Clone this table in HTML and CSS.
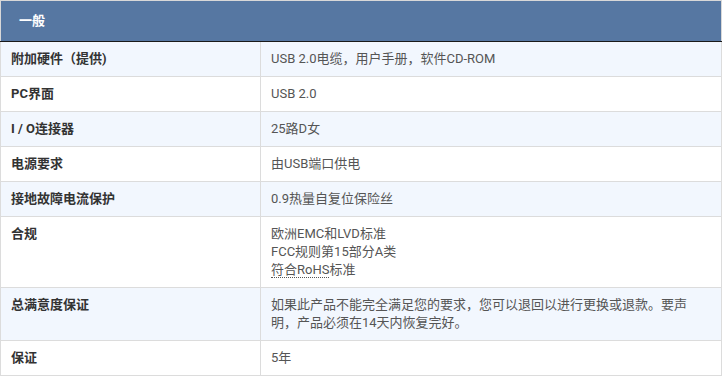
FILE: index.html
```html
<!DOCTYPE html>
<html lang="zh">
<head>
<meta charset="utf-8">
<link rel="stylesheet" href="styles.css">
</head>
<body>
<table class="spec">
  <thead>
    <tr><th colspan="2" class="head">一般</th></tr>
  </thead>
  <tbody>
    <tr class="alt"><td class="k">附加硬件（提供)</td><td class="v">USB 2.0电缆，用户手册，软件CD-ROM</td></tr>
    <tr><td class="k">PC界面</td><td class="v">USB 2.0</td></tr>
    <tr class="alt"><td class="k">I / O连接器</td><td class="v">25路D女</td></tr>
    <tr><td class="k">电源要求</td><td class="v">由USB端口供电</td></tr>
    <tr class="alt"><td class="k">接地故障电流保护</td><td class="v">0.9热量自复位保险丝</td></tr>
    <tr><td class="k">合规</td><td class="v">欧洲EMC和LVD标准<br>FCC规则第15部分A类<br><abbr class="ab">符合RoHS</abbr>标准</td></tr>
    <tr class="alt"><td class="k">总满意度保证</td><td class="v long">如果此产品不能完全满足您的要求，您可以退回以进行更换或退款。要声明，产品必须在14天内恢复完好。</td></tr>
    <tr><td class="k">保证</td><td class="v">5年</td></tr>
  </tbody>
</table>
</body>
</html>
```
FILE: styles.css
```css
html, body {
  margin: 0;
  padding: 0;
  background: #ffffff;
}
.spec {
  width: 722px;
  border-collapse: collapse;
  font-family: Roboto, "Noto Sans CJK SC", sans-serif;
  font-size: 13px;
  line-height: 18px;
  border: 1px solid #d8d8d8;
}
.head {
  background: #5677a2;
  color: #ffffff;
  font-weight: bold;
  text-align: left;
  height: 40px;
  padding: 0 0 0 18px;
  border-bottom: 1px solid #1a1a1a;
  border-top: 1px solid #d8d8d8;
}
.spec td {
  border: 1px solid #dcdcdc;
  padding: 8px 10px 8px 10px;
  vertical-align: top;
  text-align: left;
}
.spec tr.alt td {
  background: #f2f7fe;
}
.k {
  width: 239px;
  font-weight: bold;
  color: #333333;
}
.v {
  color: #555555;
}
.long {
  padding-bottom: 10px;
}
.ab {
  text-decoration: none;
  border-bottom: 1px dotted #555555;
}
```
